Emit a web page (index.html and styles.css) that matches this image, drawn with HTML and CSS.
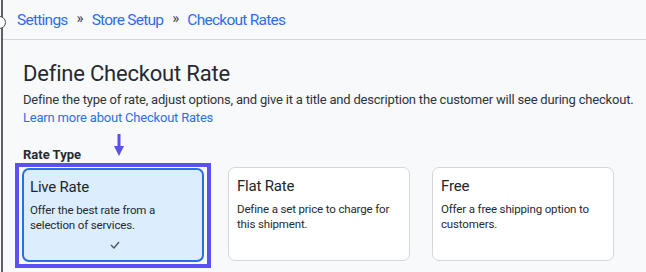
FILE: index.html
```html
<!DOCTYPE html>
<html>
<head>
<meta charset="utf-8">
<link rel="stylesheet" href="styles.css">
</head>
<body>
<div class="rail"><span class="rail-knob"></span></div>
<div class="page">
  <header class="topbar">
    <nav class="crumbs">
      <a class="crumb">Settings</a>
      <span class="sep">»</span>
      <a class="crumb">Store Setup</a>
      <span class="sep">»</span>
      <a class="crumb">Checkout Rates</a>
    </nav>
  </header>
  <main class="content">
    <h1 class="title">Define Checkout Rate</h1>
    <p class="desc">Define the type of rate, adjust options, and give it a title and description the customer will see during checkout.</p>
    <a class="learn">Learn more about Checkout Rates</a>
    <div class="label-row">
      <span class="label">Rate Type</span>
      <svg class="arrow" width="12" height="23" viewBox="0 0 12 23"><path d="M6 0 V14" stroke="#5a4ff2" stroke-width="3" fill="none"/><path d="M1 12 L6 22 L11 12 Z" fill="#5a4ff2"/></svg>
    </div>
    <div class="cards">
      <div class="highlight">
        <div class="card selected">
          <div class="card-title">Live Rate</div>
          <div class="card-text">Offer the best rate from a selection of services.</div>
          <svg class="check" width="10" height="8" viewBox="0 0 10 8"><path d="M1 4 L4 7 L9 1" stroke="#4b5563" stroke-width="1.4" fill="none"/></svg>
        </div>
      </div>
      <div class="card">
        <div class="card-title">Flat Rate</div>
        <div class="card-text">Define a set price to charge for this shipment.</div>
      </div>
      <div class="card">
        <div class="card-title">Free</div>
        <div class="card-text">Offer a free shipping option to customers.</div>
      </div>
    </div>
  </main>
</div>
</body>
</html>
```

FILE: styles.css
```css
html, body {
  margin: 0;
  padding: 0;
  background: #f8f9fb;
  font-family: Roboto, "Liberation Sans", sans-serif;
  overflow: hidden;
}
body {
  width: 646px;
  height: 272px;
  position: relative;
}
.rail {
  position: absolute;
  left: 0;
  top: 0;
  width: 3px;
  height: 272px;
  background: #5b5f66;
  border-left: 1px solid #f8f9fb;
  box-sizing: border-box;
  z-index: 2;
}
.rail-knob {
  position: absolute;
  left: -8px;
  top: 16px;
  width: 13px;
  height: 13px;
  border: 1.5px solid #4b5058;
  border-radius: 50%;
  background: #f8f9fb;
  box-sizing: border-box;
}
.page {
  display: flex;
  flex-direction: column;
}
.topbar {
  height: 39px;
  border-bottom: 1px solid #d3d6db;
  display: flex;
  align-items: center;
  padding-left: 17px;
}
.crumbs {
  display: flex;
  align-items: center;
  font-size: 15.5px;
  letter-spacing: -0.75px;
}
.crumb {
  color: #2f6ee6;
}
.sep {
  color: #3c4048;
  font-size: 15px;
  letter-spacing: 0;
  margin: 0 8px 0 9px;
  position: relative;
  top: -2px;
}
.content {
  padding-left: 23px;
  display: flex;
  flex-direction: column;
}
.title {
  margin: 21px 0 0 0;
  font-size: 22px;
  font-weight: 400;
  color: #262a30;
  line-height: 26px;
  letter-spacing: -0.2px;
}
.desc {
  margin: 4px 0 0 0;
  font-size: 13px;
  letter-spacing: -0.2px;
  color: #2f343b;
  line-height: 18px;
  white-space: nowrap;
}
.learn {
  font-size: 13px;
  letter-spacing: -0.2px;
  color: #2f6ee6;
  line-height: 18px;
  margin-top: 0;
}
.label-row {
  margin-top: 10px;
  height: 25px;
  position: relative;
  display: flex;
  align-items: flex-end;
}
.label {
  font-size: 13px;
  font-weight: 700;
  color: #262a30;
  line-height: 16px;
  position: relative;
  top: 1px;
}
.arrow {
  position: absolute;
  left: 90px;
  top: -3px;
}
.cards {
  display: flex;
  align-items: flex-start;
  gap: 22px;
  margin-top: 1px;
  margin-left: -8px;
}
.highlight {
  border: 4px solid #5a50f4;
  padding: 1px 3px 2px 3px;
  background: #f8f9fb;
  margin-right: -5px;
}
.cards > .card {
  margin-top: 4px;
}
.card {
  width: 182px;
  height: 94px;
  box-sizing: border-box;
  border: 1px solid #d3d6db;
  border-radius: 7px;
  background: #ffffff;
  padding: 8px 8px 0 8px;
  position: relative;
}
.card.selected {
  border: 2px solid #2b6de6;
  background: #dcedfd;
  padding: 7px 6px 0 6px;
}
.card-title {
  font-size: 15px;
  letter-spacing: -0.2px;
  color: #22262c;
  line-height: 20px;
}
.card-text {
  margin-top: 6px;
  font-size: 11.5px;
  letter-spacing: -0.15px;
  color: #262a30;
  line-height: 14.5px;
}
.check {
  position: absolute;
  left: 86px;
  bottom: 11px;
}
```
